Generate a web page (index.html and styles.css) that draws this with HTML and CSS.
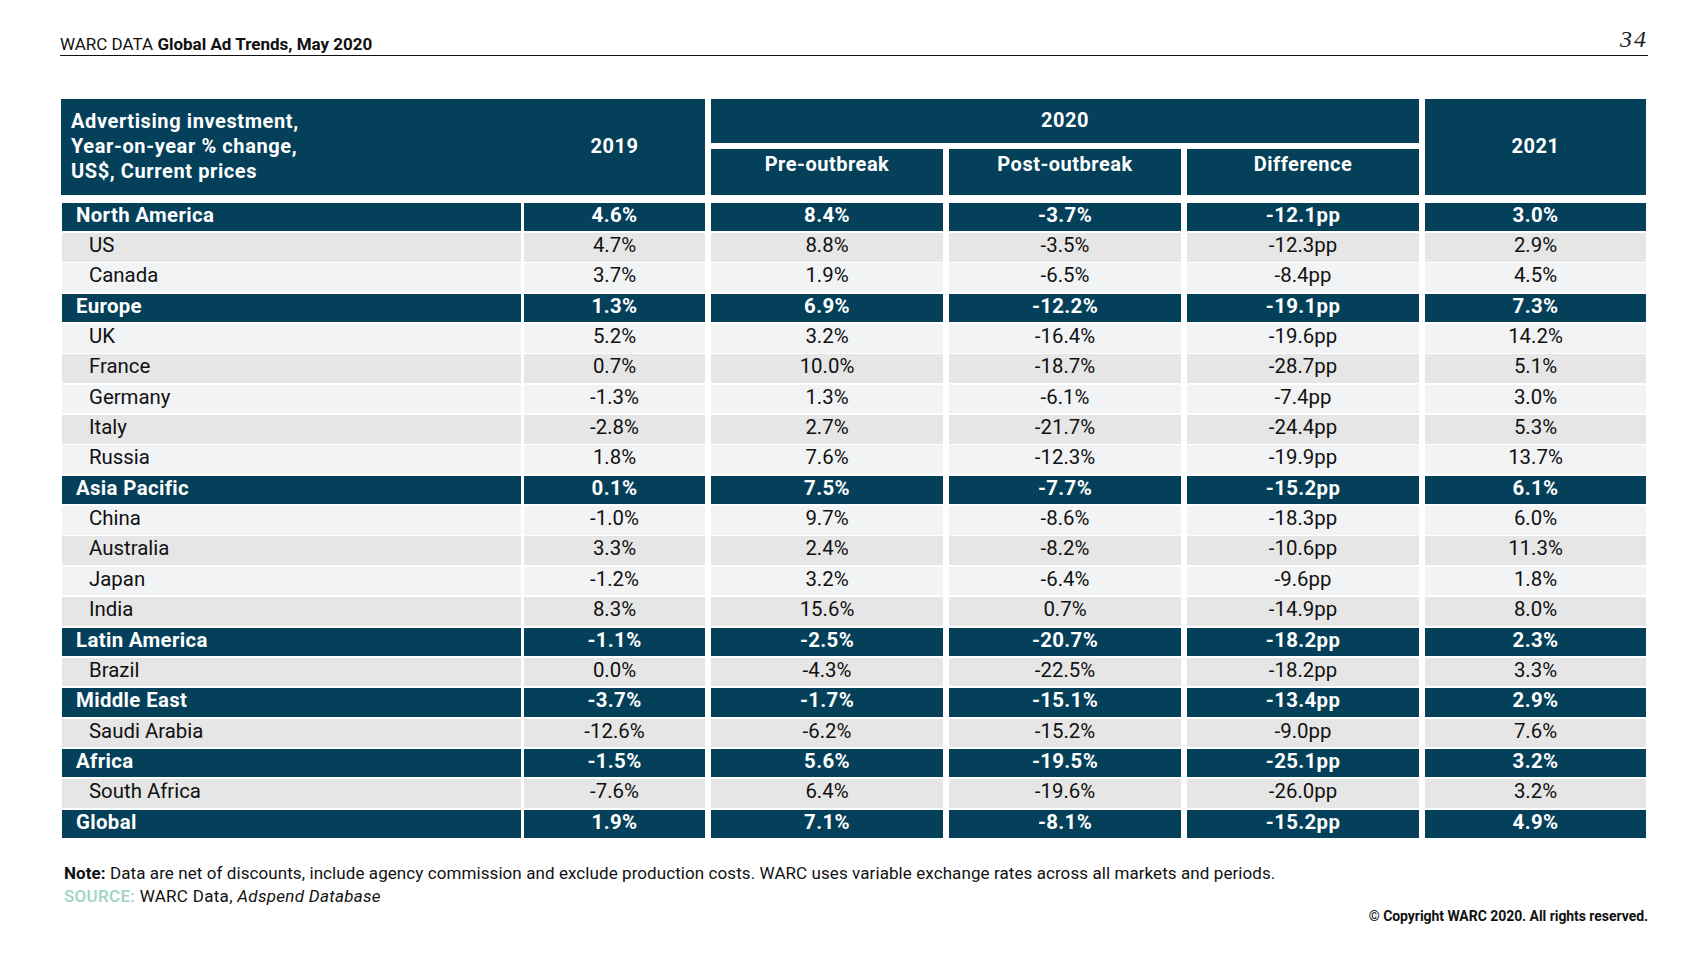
FILE: index.html
```html
<!DOCTYPE html>
<html lang="en">
<head>
<meta charset="utf-8">
<title>WARC DATA Global Ad Trends, May 2020</title>
<link rel="stylesheet" href="styles.css">
</head>
<body>
<div class="page">
  <header class="topbar">
    <div class="doc-title">WARC DATA <b>Global Ad Trends, May 2020</b></div>
    <div class="page-num">34</div>
  </header>

  <section class="table">
    <div class="thead">
      <div class="th th-main">
        <div class="th-label">Advertising investment,<br>Year-on-year % change,<br>US$, Current prices</div>
        <div class="th-year">2019</div>
      </div>
      <div class="th th-2020">2020</div>
      <div class="th th-sub th-pre">Pre-outbreak</div>
      <div class="th th-sub th-post">Post-outbreak</div>
      <div class="th th-sub th-diff">Difference</div>
      <div class="th th-2021">2021</div>
    </div>

    <div class="tbody">
      <div class="row region"><div class="c label">North America</div><div class="c">4.6%</div><div class="c">8.4%</div><div class="c">-3.7%</div><div class="c">-12.1pp</div><div class="c">3.0%</div></div>
      <div class="row grey"><div class="c label">US</div><div class="c">4.7%</div><div class="c">8.8%</div><div class="c">-3.5%</div><div class="c">-12.3pp</div><div class="c">2.9%</div></div>
      <div class="row light"><div class="c label">Canada</div><div class="c">3.7%</div><div class="c">1.9%</div><div class="c">-6.5%</div><div class="c">-8.4pp</div><div class="c">4.5%</div></div>
      <div class="row region"><div class="c label">Europe</div><div class="c">1.3%</div><div class="c">6.9%</div><div class="c">-12.2%</div><div class="c">-19.1pp</div><div class="c">7.3%</div></div>
      <div class="row light"><div class="c label">UK</div><div class="c">5.2%</div><div class="c">3.2%</div><div class="c">-16.4%</div><div class="c">-19.6pp</div><div class="c">14.2%</div></div>
      <div class="row grey"><div class="c label">France</div><div class="c">0.7%</div><div class="c">10.0%</div><div class="c">-18.7%</div><div class="c">-28.7pp</div><div class="c">5.1%</div></div>
      <div class="row light"><div class="c label">Germany</div><div class="c">-1.3%</div><div class="c">1.3%</div><div class="c">-6.1%</div><div class="c">-7.4pp</div><div class="c">3.0%</div></div>
      <div class="row grey"><div class="c label">Italy</div><div class="c">-2.8%</div><div class="c">2.7%</div><div class="c">-21.7%</div><div class="c">-24.4pp</div><div class="c">5.3%</div></div>
      <div class="row light"><div class="c label">Russia</div><div class="c">1.8%</div><div class="c">7.6%</div><div class="c">-12.3%</div><div class="c">-19.9pp</div><div class="c">13.7%</div></div>
      <div class="row region"><div class="c label">Asia Pacific</div><div class="c">0.1%</div><div class="c">7.5%</div><div class="c">-7.7%</div><div class="c">-15.2pp</div><div class="c">6.1%</div></div>
      <div class="row light"><div class="c label">China</div><div class="c">-1.0%</div><div class="c">9.7%</div><div class="c">-8.6%</div><div class="c">-18.3pp</div><div class="c">6.0%</div></div>
      <div class="row grey"><div class="c label">Australia</div><div class="c">3.3%</div><div class="c">2.4%</div><div class="c">-8.2%</div><div class="c">-10.6pp</div><div class="c">11.3%</div></div>
      <div class="row light"><div class="c label">Japan</div><div class="c">-1.2%</div><div class="c">3.2%</div><div class="c">-6.4%</div><div class="c">-9.6pp</div><div class="c">1.8%</div></div>
      <div class="row grey"><div class="c label">India</div><div class="c">8.3%</div><div class="c">15.6%</div><div class="c">0.7%</div><div class="c">-14.9pp</div><div class="c">8.0%</div></div>
      <div class="row region"><div class="c label">Latin America</div><div class="c">-1.1%</div><div class="c">-2.5%</div><div class="c">-20.7%</div><div class="c">-18.2pp</div><div class="c">2.3%</div></div>
      <div class="row grey"><div class="c label">Brazil</div><div class="c">0.0%</div><div class="c">-4.3%</div><div class="c">-22.5%</div><div class="c">-18.2pp</div><div class="c">3.3%</div></div>
      <div class="row region"><div class="c label">Middle East</div><div class="c">-3.7%</div><div class="c">-1.7%</div><div class="c">-15.1%</div><div class="c">-13.4pp</div><div class="c">2.9%</div></div>
      <div class="row grey"><div class="c label">Saudi Arabia</div><div class="c">-12.6%</div><div class="c">-6.2%</div><div class="c">-15.2%</div><div class="c">-9.0pp</div><div class="c">7.6%</div></div>
      <div class="row region"><div class="c label">Africa</div><div class="c">-1.5%</div><div class="c">5.6%</div><div class="c">-19.5%</div><div class="c">-25.1pp</div><div class="c">3.2%</div></div>
      <div class="row grey"><div class="c label">South Africa</div><div class="c">-7.6%</div><div class="c">6.4%</div><div class="c">-19.6%</div><div class="c">-26.0pp</div><div class="c">3.2%</div></div>
      <div class="row region"><div class="c label">Global</div><div class="c">1.9%</div><div class="c">7.1%</div><div class="c">-8.1%</div><div class="c">-15.2pp</div><div class="c">4.9%</div></div>
    </div>
  </section>

  <footer class="notes">
    <p class="note"><b>Note:</b> Data are net of discounts, include agency commission and exclude production costs. WARC uses variable exchange rates across all markets and periods.</p>
    <p class="source"><span class="source-tag">SOURCE:</span> WARC Data, <i>Adspend Database</i></p>
    <p class="copyright">© Copyright WARC 2020. All rights reserved.</p>
  </footer>
</div>
</body>
</html>
```

FILE: styles.css
```css
* { box-sizing: border-box; }

html, body {
  margin: 0;
  padding: 0;
  background: #ffffff;
}

body {
  font-family: Roboto, "Liberation Sans", Arial, sans-serif;
  color: #111111;
  width: 1707px;
  height: 960px;
  overflow: hidden;
}

.page {
  padding: 0 60px 0 62px;
}

/* ---------- top bar ---------- */
.topbar {
  display: flex;
  justify-content: space-between;
  align-items: flex-end;
  height: 56px;
  margin-left: -2px;
  margin-right: -1px;
  border-bottom: 1px solid #111111;
}

.doc-title {
  font-size: 17px;
  line-height: 20px;
  padding-bottom: 1px;
  color: #111;
}

.doc-title b { font-weight: 700; }

.page-num {
  font-family: "Liberation Serif", "Times New Roman", serif;
  font-style: italic;
  font-size: 24px;
  line-height: 24px;
  letter-spacing: 2px;
  padding-bottom: 4px;
  color: #222;
}

/* ---------- table ---------- */
.table {
  margin-top: 43px;
  width: 1584px;
}

.thead {
  display: grid;
  grid-template-columns: 456px 181px 232px 232px 232px 221px;
  grid-template-rows: 43.5px 45.5px;
  column-gap: 6px;
  row-gap: 6.5px;
}

.th {
  background: #04405a;
  color: #ffffff;
  font-weight: 700;
  font-size: 20px;
  letter-spacing: 0.5px;
  display: flex;
  align-items: center;
  justify-content: center;
}

.th-main {
  grid-column: 1 / 3;
  grid-row: 1 / 3;
  margin-left: -1px;
  display: grid;
  grid-template-columns: 1fr 181px;
  align-items: center;
}

.th-label {
  padding-left: 10px;
  line-height: 25px;
  font-size: 20px;
  letter-spacing: 0.6px;
}

.th-year {
  text-align: center;
  padding-bottom: 2px;
}

.th-2020 { grid-column: 3 / 6; grid-row: 1; padding-bottom: 2px; }
.th-2021 { grid-column: 6; grid-row: 1 / 3; padding-bottom: 2px; }

.th-sub {
  grid-row: 2;
  align-items: flex-start;
  line-height: 24px;
  padding-top: 3px;
}

.th-pre { grid-column: 3; }
.th-post { grid-column: 4; }
.th-diff { grid-column: 5; }

.tbody {
  margin-top: 8.2px;
  display: flex;
  flex-direction: column;
  gap: 4.17px;
}

.row {
  display: grid;
  grid-template-columns: 456px 181px 232px 232px 232px 221px;
  column-gap: 6px;
  height: 26.2px;
}

.c {
  display: flex;
  align-items: center;
  justify-content: center;
  font-size: 20.4px;
  line-height: 24px;
  padding-bottom: 4.5px;
}

.c.label {
  justify-content: flex-start;
  margin-right: -3px;
  padding-left: 27px;
}

.row.region .c {
  background: #04405a;
  color: #ffffff;
  font-weight: 700;
  letter-spacing: 0.35px;
}

.row.region .c.label {
  padding-left: 14px;
}

.row.grey .c {
  background: #e6e6e6;
  color: #111111;
}

.row.light .c {
  background: #f2f3f5;
  color: #111111;
}

/* ---------- notes ---------- */
.notes {
  padding-left: 2px;
  margin-top: 26.7px;
}

.notes p {
  margin: 0;
}

.note,
.source {
  font-size: 17px;
  line-height: 22.3px;
  letter-spacing: 0.08px;
  color: #111111;
}

.source {
  letter-spacing: 0.3px;
}

.note b { font-weight: 700; }

.source-tag {
  color: #9ed6c1;
  font-weight: 500;
}

.copyright {
  text-align: right;
  font-size: 14px;
  line-height: 16px;
  font-weight: 700;
  letter-spacing: -0.05px;
  margin-top: 0.6px !important;
  margin-right: -1px !important;
  color: #111111;
}
```
